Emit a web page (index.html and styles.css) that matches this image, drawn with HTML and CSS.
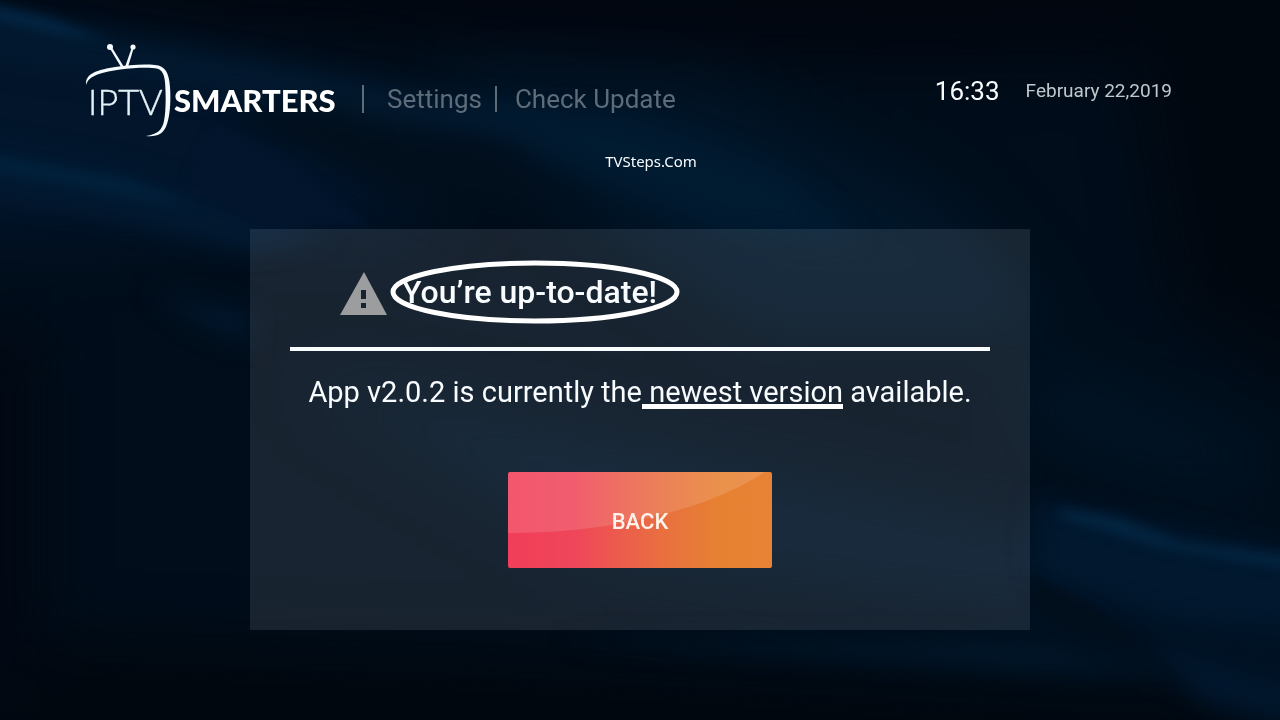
FILE: index.html
```html
<!DOCTYPE html>
<html lang="en">
<head>
<meta charset="utf-8">
<meta name="viewport" content="width=device-width, initial-scale=1">
<title>IPTV Smarters - Check Update</title>
<link rel="stylesheet" href="styles.css">
</head>
<body>
<svg class="backdrop" viewBox="0 0 1280 720" preserveAspectRatio="none" aria-hidden="true">
  <defs>
    <filter id="haze" x="-30%" y="-30%" width="160%" height="160%" color-interpolation-filters="sRGB"><feGaussianBlur stdDeviation="32"/></filter>
    <filter id="soft" x="-20%" y="-20%" width="140%" height="140%" color-interpolation-filters="sRGB"><feGaussianBlur stdDeviation="12"/></filter>
    <filter id="fine" x="-20%" y="-20%" width="140%" height="140%" color-interpolation-filters="sRGB"><feGaussianBlur stdDeviation="6"/></filter>
  </defs>
  <rect width="1280" height="720" fill="#010d1a"/>
  <g filter="url(#haze)">
    <path d="M-60 -60H1340V50L900 60L500 40L200 20L-60 -20Z" fill="#01060f"/>
    <path d="M-60 20L200 60L400 110L420 230L-60 240Z" fill="#02152b"/>
    <path d="M420 70L700 80L950 200L1060 330L760 330L560 200Z" fill="#011629"/>
    <path d="M1120 -60H1340V400L1180 300Z" fill="#01070f"/>
    <path d="M-60 640L500 660L1200 700L1340 780H-60Z" fill="#01070e"/>
    <path d="M-60 330H40V720H-60Z" fill="#010813"/>
    <path d="M300 380L640 440L1030 520L1340 560V700L1050 620L600 560Z" fill="#011427"/>
    <path d="M1030 360L1140 400L1300 470L1200 480L1030 430Z" fill="#011628"/>
  </g>
  <g filter="url(#soft)">
    <path d="M-30 10L110 36L260 62L420 90L560 140L440 130L260 100L-30 60Z" fill="#02192f"/>
    <path d="M220 110L330 165L500 250L420 180L600 210L480 150L330 105Z" fill="#010f1d"/>
    <path d="M-30 140L120 170L230 205L330 235L240 250L110 215L-30 190Z" fill="#021a32"/>
    <path d="M440 95L640 120L780 170L860 240L720 230L560 160Z" fill="#011b31"/>
    <path d="M1035 500L1130 520L1310 560V625L1180 620L1035 575Z" fill="#01182e"/>
    <path d="M1150 640L1310 690V730L1200 700Z" fill="#01172d"/>
    <path d="M560 640L1030 640L1180 675L1030 670Z" fill="#01172a"/>
    <path d="M150 290L250 310V345L200 325Z" fill="#01172d"/>
  </g>
  <g filter="url(#fine)">
    <path d="M-10 4L50 18L112 42L60 36L-10 20Z" fill="#032543"/>
    <path d="M-10 155L60 167L130 180L200 208L130 196L-10 170Z" fill="#02213c"/>
    <path d="M1060 508L1120 518L1180 542L1290 556V570L1160 548L1060 518Z" fill="#032541"/>
    <path d="M215 125L290 165L370 225H250L190 180Z" fill="#02152d"/>
    <path d="M1030 576L1090 606L1150 650L1070 628L1030 606Z" fill="#010e1b"/>
  </g>
</svg>

<div class="screen">
  <header class="topbar">
    <svg class="logo" viewBox="0 0 250 96" role="img" aria-label="IPTV Smarters">
      <g fill="#f6fbff">
        <circle cx="24" cy="5" r="3"/>
        <circle cx="47" cy="5" r="2.600"/>
        <path d="M23 5L25 4L38 25H35Z"/>
        <path d="M46 5L48 5L42 25H39Z"/>
        <path d="M0 43C-1 31 12 28 29 25C43 23 57 22 69 23C79 24 83 30 84 45C85 59 84 73 81 82C78 92 71 95 60 94C72 92 76 88 78 79C80 69 80 53 79 40C78 30 75 26 66 26C50 25 25 28 13 32C5 35 2 37 0 43Z"/>
      </g>
      <text class="logo-thin" x="2" y="73">IPTV</text>
      <text class="logo-bold" x="88" y="70">SMARTERS</text>
    </svg>
    <nav class="crumbs" aria-label="Breadcrumb">
      <span class="bar bar-first"></span>
      <a href="#settings">Settings</a>
      <span class="bar"></span>
      <a href="#update" aria-current="page">Check Update</a>
    </nav>
    <div class="clock">
      <time class="time">16:33</time>
      <time class="date" datetime="2019-02-22">February 22,2019</time>
    </div>
  </header>

  <p class="credit">TVSteps.Com</p>

  <main class="panel">
    <div class="title-row">
      <svg class="warning" viewBox="0 0 48 44" aria-hidden="true">
        <path fill="#9b9d9f" fill-rule="evenodd" d="M24 0L47 43H0ZM21 18V27H26V18ZM21 31V36H26V31Z"/>
      </svg>
      <h1 class="title">You’re up-to-date!
        <svg class="ring" viewBox="0 0 290 64" preserveAspectRatio="none" aria-hidden="true"><ellipse cx="145" cy="32" rx="142" ry="29"/></svg>
      </h1>
    </div>
    <p class="message">App v2.0.2 is currently the<span class="mark"> newest version</span> available.</p>
    <button class="back" type="button">
      <svg class="shine" viewBox="0 0 264 96" preserveAspectRatio="none" aria-hidden="true"><path d="M0 0H257C210 31 120 61 0 61Z"/></svg>
      <span class="back-label">BACK</span>
    </button>
  </main>
</div>
</body>
</html>
```
FILE: styles.css
```css
* { box-sizing: border-box; }

body {
  margin: 0;
  background: #010d1a;
  color: #f8fcff;
  font-family: Roboto, "Liberation Sans", sans-serif;
}

.backdrop {
  position: fixed;
  inset: 0;
  z-index: -1;
  width: 100%;
  height: 100%;
}

.screen {
  min-height: 100vh;
  padding: 42px 0 90px;
}

.topbar {
  display: flex;
  align-items: flex-start;
  padding: 0 108px 0 86px;
}

.logo { width: 250px; height: 96px; }
.logo-thin { font: 300 36px Lato, sans-serif; fill: #e4f2f7; stroke: #e4f2f7; stroke-width: 0.4px; }
.logo-bold { font: 900 31px Lato, sans-serif; fill: #fff; }

.crumbs {
  display: flex;
  align-items: center;
  margin: 41px 0 0 26px;
  font-size: 26px;
  line-height: 32px;
}

.crumbs a { color: #5e6c7a; text-decoration: none; }

.bar { width: 2px; height: 26px; margin: 0 18px 0 13px; background: #5e6c7a; }
.bar-first { width: 2px; height: 28px; margin: 0 23px 0 0; }

.clock {
  display: flex;
  align-items: center;
  gap: 26px;
  margin: 33px 0 0 auto;
  line-height: 32px;
}

.time { font-size: 26px; }
.date { font-size: 19px; color: #c0c8ce; }

.credit {
  margin: 13px 0 0 22px;
  font: 15px/20px "Noto Sans", sans-serif;
  text-align: center;
}

.panel {
  display: flex;
  flex-direction: column;
  align-items: center;
  width: 780px;
  max-width: 100%;
  margin: 58px auto 0;
  padding: 32px 40px 62px;
  background: rgba(238, 248, 255, 0.1);
}

.title-row {
  display: flex;
  align-items: flex-start;
  align-self: stretch;
  gap: 14px;
  padding: 11px 50px 31px;
  border-bottom: 4px solid #f8fcff;
}

.warning { width: 48px; height: 44px; }

.title {
  position: relative;
  margin: 0;
  font-size: 32px;
  font-weight: 500;
  line-height: 40px;
}

.ring {
  position: absolute;
  top: -12px;
  left: -12px;
  width: 290px;
  height: 64px;
  fill: none;
  stroke: #fff;
  stroke-width: 5;
}

.message {
  margin: 21px 0 60px;
  font-size: 29px;
  line-height: 40px;
}

.mark {
  background: linear-gradient(#fff, #fff) left bottom / 100% 5px no-repeat;
}

.back {
  position: relative;
  width: 264px;
  height: 96px;
  padding: 3px 0 0;
  overflow: hidden;
  border: 0;
  border-radius: 2px;
  background: linear-gradient(90deg, #f13e59 0%, #ef465a 25%, #e96f40 58%, #e78132 80%, #e78335 100%);
  color: #fff3ea;
  font: 500 22px/28px Roboto, sans-serif;
}

.shine {
  position: absolute;
  inset: 0;
  width: 100%;
  height: 100%;
  fill: rgba(255, 255, 255, 0.13);
}

.back-label { position: relative; }
```
